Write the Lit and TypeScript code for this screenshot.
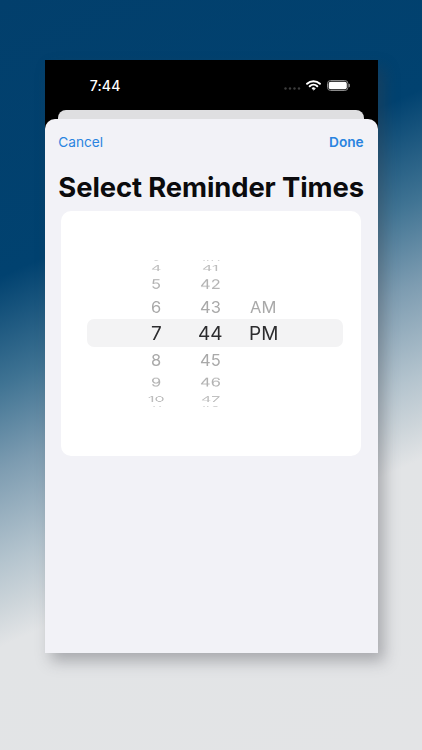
import { LitElement, html, css } from "lit";
import { customElement } from "lit/decorators.js";

interface Row {
  h: number;
  hour: string;
  min: string;
  mer: string;
  size: number;
  color: string;
  sy: number;
  sel?: boolean;
}

const ROWS: Row[] = [
  { h: 5, hour: "3", min: "40", mer: "", size: 15, color: "#d4d4d4", sy: 0.12 },
  { h: 10, hour: "4", min: "41", mer: "", size: 16, color: "#bdbdbd", sy: 0.48 },
  { h: 22, hour: "5", min: "42", mer: "", size: 16.5, color: "#b2b2b2", sy: 0.8 },
  { h: 24, hour: "6", min: "43", mer: "AM", size: 16.5, color: "#a9a9a9", sy: 1 },
  { h: 28.3, hour: "7", min: "44", mer: "PM", size: 19, color: "#2c2c2e", sy: 1, sel: true },
  { h: 25.7, hour: "8", min: "45", mer: "", size: 16.5, color: "#a9a9a9", sy: 1 },
  { h: 19, hour: "9", min: "46", mer: "", size: 16.5, color: "#b2b2b2", sy: 0.74 },
  { h: 13.5, hour: "10", min: "47", mer: "", size: 16, color: "#bdbdbd", sy: 0.45 },
  { h: 2.5, hour: "11", min: "48", mer: "", size: 15, color: "#d4d4d4", sy: 0.1 },
];

@customElement("app-root")
export class AppRoot extends LitElement {
  static styles = css`
    :host {
      display: block;
      width: 422px;
      height: 750px;
      overflow: hidden;
      font-family: "Inter", "Liberation Sans", Arial, sans-serif;
    }
    .backdrop {
      width: 422px;
      height: 750px;
      box-sizing: border-box;
      padding: 60px 44.5px 0 44.7px;
      background: linear-gradient(
        156deg,
        #023f6c 0%,
        #014270 29.5%,
        #3f7393 41%,
        #7d9cb1 50%,
        #b4c4ce 60%,
        #cdd5da 65%,
        #e2e4e6 69%,
        #e3e4e6 100%
      );
    }
    .phone {
      height: 592.5px;
      background: #000;
      box-shadow: 6px 8px 14px rgba(60, 60, 70, 0.35);
      display: flex;
      flex-direction: column;
    }
    .status {
      height: 50px;
      flex: none;
      display: flex;
      align-items: center;
      justify-content: space-between;
      padding: 0 28px 0 45px;
      color: #fff;
      box-sizing: border-box;
    }
    .time {
      font-size: 14px;
      font-weight: 500;
      letter-spacing: 0.2px;
    }
    .icons {
      display: flex;
      align-items: center;
      gap: 5.5px;
    }
    .dots {
      margin-top: 6px;
    }
    .behind {
      height: 8.5px;
      flex: none;
      margin: 0 14px 0 13.5px;
      background: #dfdfe1;
      border-radius: 8px 8px 0 0;
    }
    .sheet {
      flex: 1;
      background: #f2f2f7;
      border-radius: 10px 10px 0 0;
      padding: 0 16.5px 0 16.6px;
      display: flex;
      flex-direction: column;
    }
    .nav {
      display: flex;
      justify-content: space-between;
      padding-top: 15.7px;
      margin: 0 -2.7px 0 -3px;
      font-size: 13.7px;
      color: #2a84e0;
      line-height: 17px;
    }
    .done {
      font-weight: 600;
    }
    h1 {
      margin: 20.3px -6px 0;
      font-size: 27.4px;
      line-height: 32px;
      font-weight: 700;
      color: #0b0b0d;
      text-align: center;
      white-space: nowrap;
      letter-spacing: -0.1px;
    }
    .card {
      margin-top: 7.5px;
      height: 245px;
      box-sizing: border-box;
      padding: 47px 18px 0 25.7px;
      background: #fff;
      border-radius: 10px;
    }
    .row {
      display: grid;
      grid-template-columns: 54.7px 54.7px 51px;
      grid-template-rows: minmax(0, 1fr);
      padding-left: 41.65px;
      align-items: center;
      justify-items: center;
    }
    .row.sel {
      background: #f3f3f4;
      border-radius: 7px;
    }
    .row span {
      display: block;
      white-space: nowrap;
      line-height: 1;
      will-change: transform;
    }
  `;

  render() {
    return html`
      <div class="backdrop">
        <div class="phone">
          <div class="status">
            <span class="time">7:44</span>
            <span class="icons">
              <svg class="dots" width="17" height="3" viewBox="0 0 17 3">
                <circle cx="1.5" cy="1.5" r="1.2" fill="#3d3d3d" />
                <circle cx="6" cy="1.5" r="1.2" fill="#3d3d3d" />
                <circle cx="10.5" cy="1.5" r="1.2" fill="#3d3d3d" />
                <circle cx="15" cy="1.5" r="1.2" fill="#3d3d3d" />
              </svg>
              <svg width="15" height="11" viewBox="0 0 15 11" fill="none" stroke="#fff" stroke-width="2" stroke-linecap="round">
                <path d="M1.1 3.8a9.2 9.2 0 0 1 12.8 0" />
                <path d="M3.7 6.3a5.5 5.5 0 0 1 7.6 0" />
                <path d="M7.5 9.8 L5.9 8.3 a2.4 2.4 0 0 1 3.2 0 Z" fill="#fff" stroke-width="0.8" stroke-linejoin="round" />
              </svg>
              <svg width="23" height="11" viewBox="0 0 23 11">
                <rect x="0.5" y="0.5" width="20.5" height="10" rx="3.2" fill="none" stroke="#8a8a8a" />
                <rect x="1.7" y="1.7" width="18.1" height="7.6" rx="2" fill="#fff" />
                <rect x="21.6" y="3.8" width="1.4" height="3.4" rx="0.7" fill="#8a8a8a" />
              </svg>
            </span>
          </div>
          <div class="behind"></div>
          <div class="sheet">
            <div class="nav"><span>Cancel</span><span class="done">Done</span></div>
            <h1>Select Reminder Times</h1>
            <div class="card">
              ${ROWS.map((r) => {
                const st = `font-size:${r.size}px;color:${r.color};transform:scaleY(${r.sy})`;
                return html`<div class="row ${r.sel ? "sel" : ""}" style="height:${r.h}px">
                  <span style=${st}>${r.hour}</span>
                  <span style=${st}>${r.min}</span>
                  <span style=${st}>${r.mer}</span>
                </div>`;
              })}
            </div>
          </div>
        </div>
      </div>
    `;
  }
}
